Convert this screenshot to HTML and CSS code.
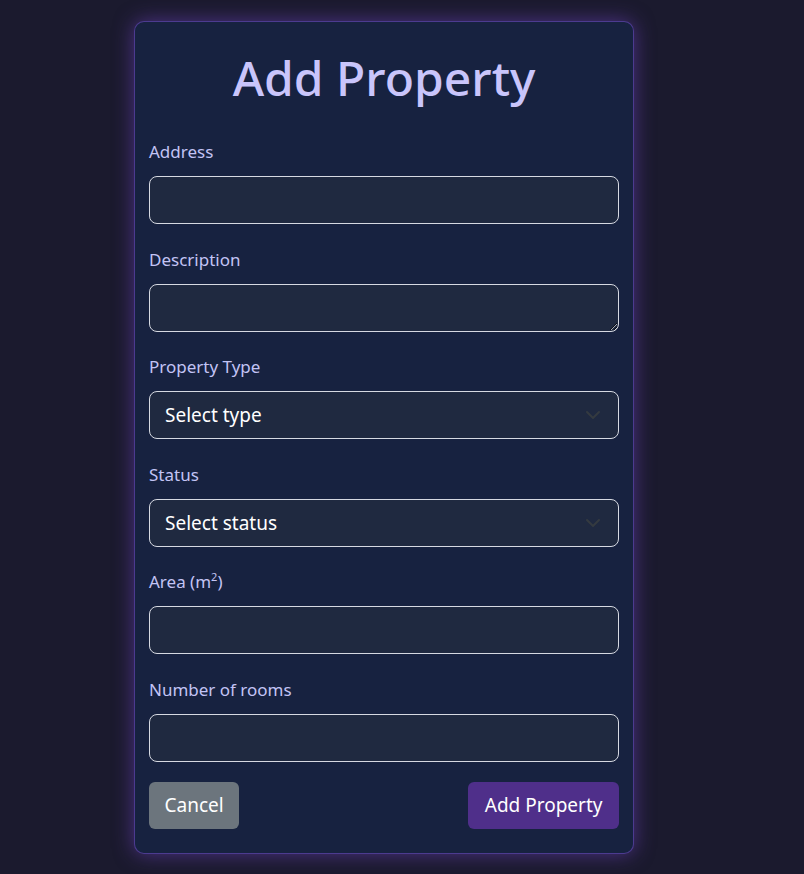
FILE: index.html
```html
<!DOCTYPE html>
<html lang="en">
<head>
<meta charset="utf-8">
<title>Add Property</title>
<link rel="stylesheet" href="styles.css">
</head>
<body>
<main class="page">
  <form class="card">
    <h1 class="title">Add Property</h1>
    <div class="group">
      <label class="label" for="address">Address</label>
      <input class="control" id="address" type="text">
    </div>
    <div class="group">
      <label class="label" for="description">Description</label>
      <textarea class="control area" id="description"></textarea>
    </div>
    <div class="group">
      <label class="label" for="type">Property Type</label>
      <div class="select-wrap">
        <select class="control select" id="type"><option>Select type</option></select>
        <svg class="chevron" width="16" height="16" viewBox="0 0 16 16"><path d="M2 5l6 6 6-6" fill="none" stroke="#343a40" stroke-width="2" stroke-linecap="round" stroke-linejoin="round"/></svg>
      </div>
    </div>
    <div class="group">
      <label class="label" for="status">Status</label>
      <div class="select-wrap">
        <select class="control select" id="status"><option>Select status</option></select>
        <svg class="chevron" width="16" height="16" viewBox="0 0 16 16"><path d="M2 5l6 6 6-6" fill="none" stroke="#343a40" stroke-width="2" stroke-linecap="round" stroke-linejoin="round"/></svg>
      </div>
    </div>
    <div class="group">
      <label class="label" for="area">Area (m<sup>2</sup>)</label>
      <input class="control" id="area" type="text">
    </div>
    <div class="group last">
      <label class="label" for="rooms">Number of rooms</label>
      <input class="control" id="rooms" type="text">
    </div>
    <div class="actions">
      <button type="button" class="btn btn-cancel">Cancel</button>
      <button type="button" class="btn btn-primary">Add Property</button>
    </div>
  </form>
</main>
</body>
</html>
```
FILE: styles.css
```css
html, body {
  margin: 0;
  padding: 0;
  background: #1b1a2e;
  font-family: "Noto Sans", "Open Sans", sans-serif;
}
.page {
  padding: 21px 0 0 134px;
  min-height: 874px;
  box-sizing: border-box;
}
.card {
  width: 500px;
  box-sizing: border-box;
  padding: 14px 14px 24px;
  background: #172240;
  border: 1px solid rgba(120, 80, 210, 0.55);
  border-radius: 10px;
  box-shadow: 0 0 20px rgba(111, 66, 193, 0.6);
}
.title {
  margin: 13px 0 33px;
  text-align: center;
  font-size: 48px;
  line-height: 58px;
  font-weight: 500;
  color: #c9c5fb;
}
.group {
  margin-bottom: 23.6px;
}
.group.last {
  margin-bottom: 20px;
}
.label {
  display: block;
  font-size: 17px;
  line-height: 24px;
  margin-bottom: 12px;
  color: #c3c4f5;
}
.label sup {
  font-size: 11px;
  line-height: 0;
}
.control {
  display: block;
  width: 100%;
  height: 48px;
  box-sizing: border-box;
  margin: 0;
  padding: 8px 15px;
  font-family: inherit;
  font-size: 19px;
  line-height: 30px;
  color: #ffffff;
  background: #1f2940;
  border: 1px solid #d6d9e2;
  border-radius: 8px;
  outline: none;
}
.area {
  resize: vertical;
}
.select-wrap {
  position: relative;
}
.select {
  appearance: none;
  -webkit-appearance: none;
}
.chevron {
  position: absolute;
  right: 18px;
  top: 16px;
  pointer-events: none;
}
.actions {
  display: flex;
  justify-content: space-between;
}
.btn {
  height: 47px;
  padding: 0 15.5px;
  font-family: inherit;
  font-size: 19px;
  color: #ffffff;
  border: none;
  border-radius: 6px;
}
.btn-primary {
  padding: 0 16.5px;
}
.btn-cancel {
  background: #6c757d;
}
.btn-primary {
  background: #4f2f8a;
}
```
